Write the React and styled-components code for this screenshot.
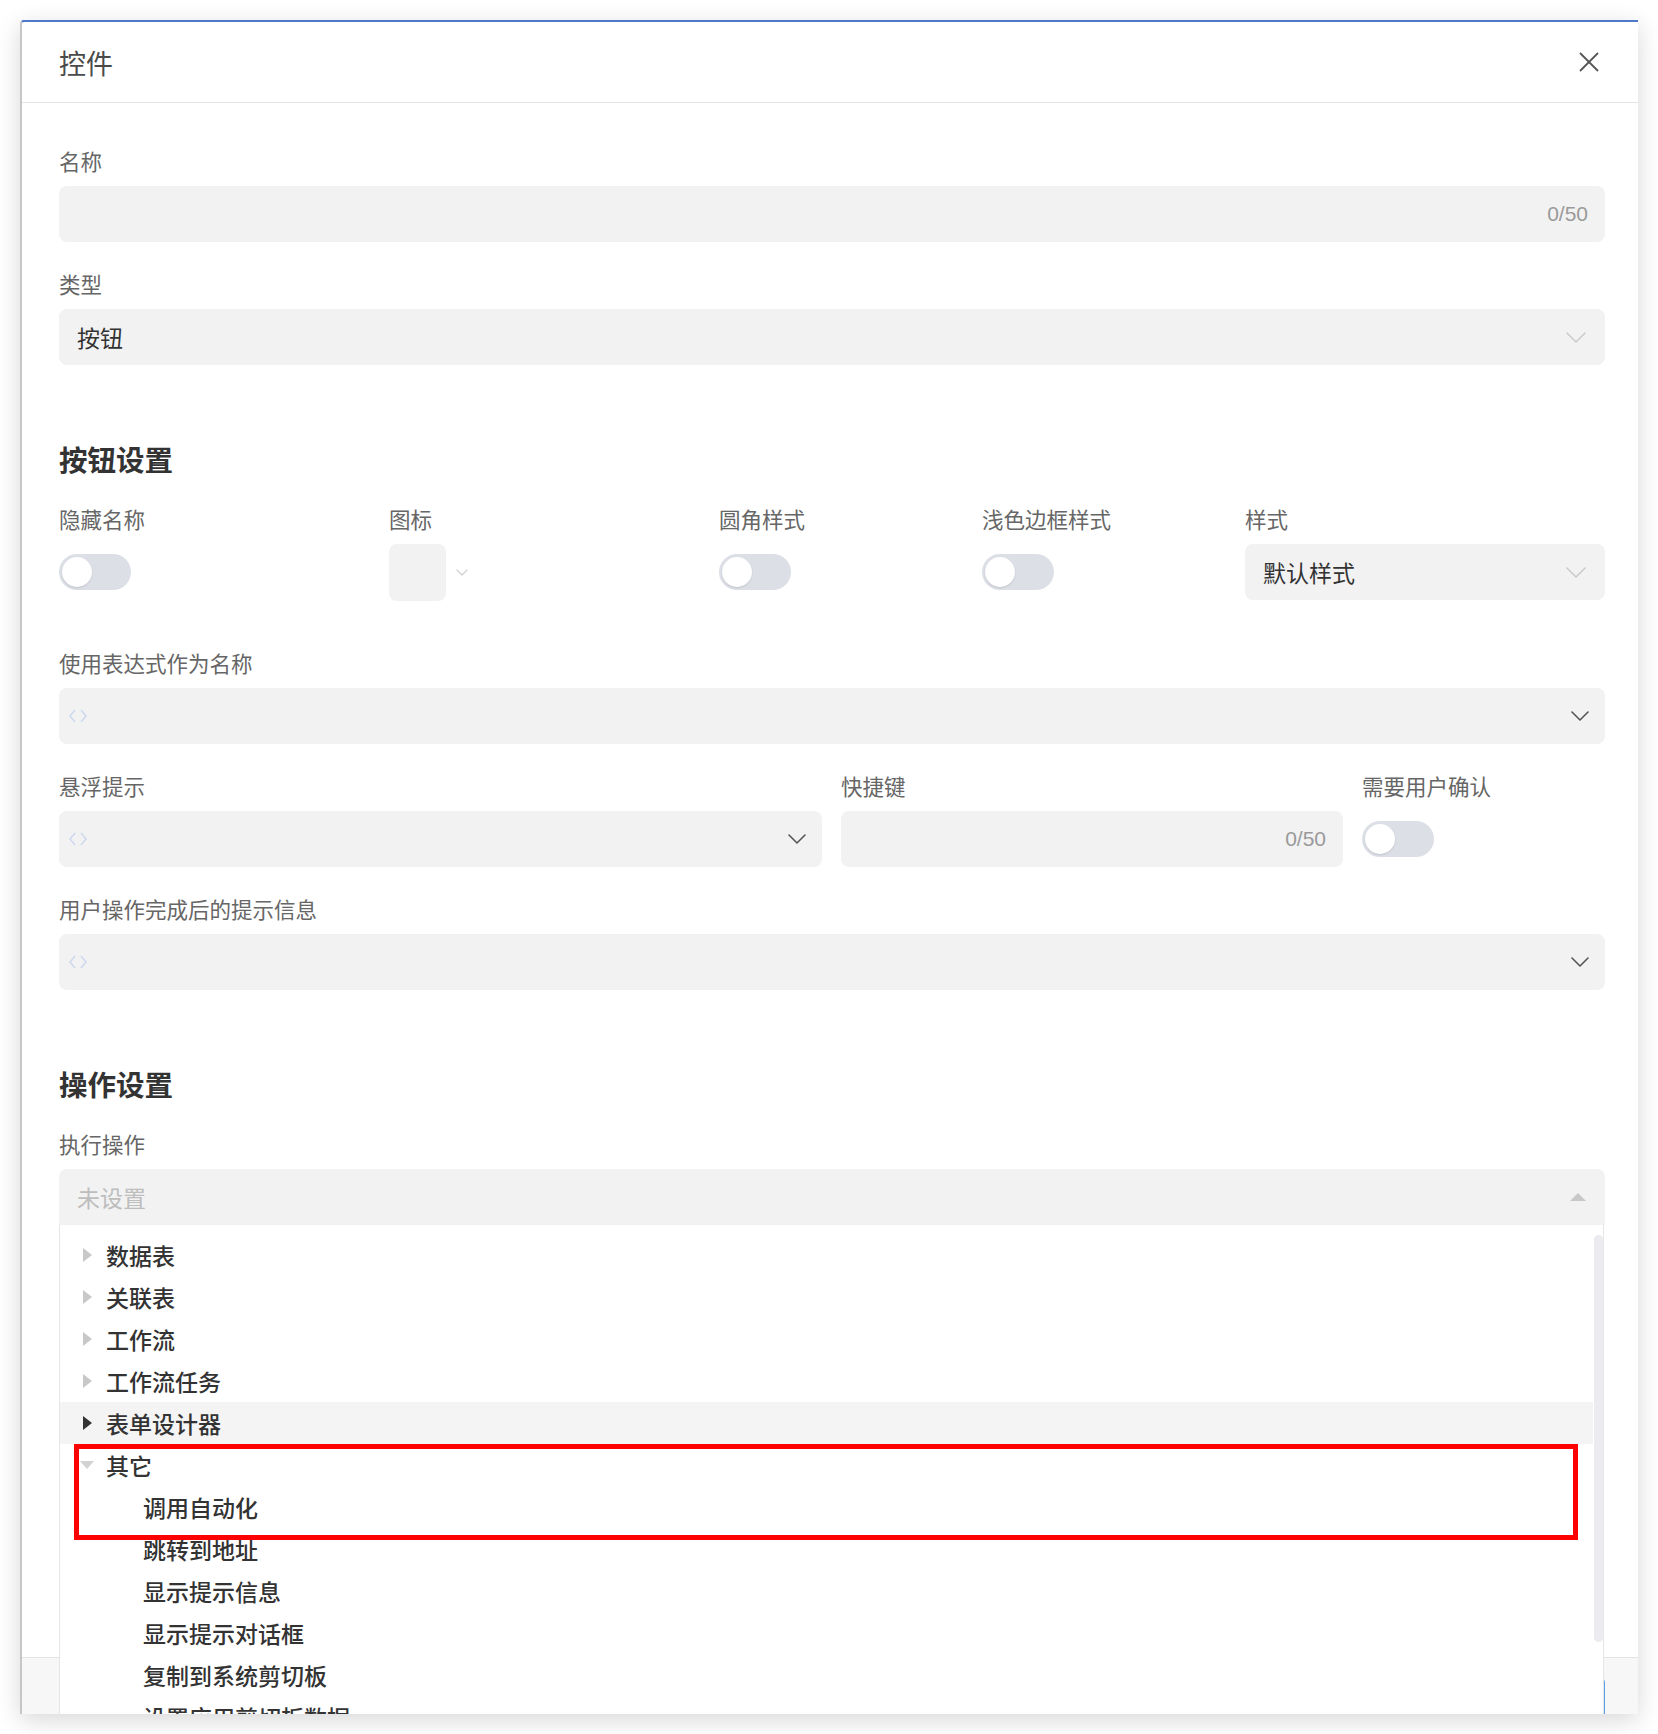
import React from 'react'
import styled, { createGlobalStyle } from 'styled-components'

const GlobalStyle = createGlobalStyle`
  html, body {
    margin: 0;
    padding: 0;
    background: #fff;
  }
  body {
    font-family: "Noto Sans CJK SC", "Noto Sans", sans-serif;
    color: #333;
  }
  * {
    box-sizing: border-box;
  }
`

const Page = styled.div`
  width: 1658px;
  height: 1734px;
  padding: 20px 20px 0 20px;
`

const Dialog = styled.div`
  position: relative;
  width: 1618px;
  height: 1694px;
  display: flex;
  flex-direction: column;
  background: #fff;
  border-top: 2px solid #4c79c9;
  border-left: 2px solid #c6c6c6;
  border-radius: 4px 0 0 0;
  box-shadow: 0 6px 24px rgba(0, 0, 0, 0.16);
  overflow: hidden;
`

const Header = styled.header`
  flex: none;
  height: 81px;
  display: flex;
  align-items: center;
  justify-content: space-between;
  padding: 0 38px 0 37px;
  border-bottom: 1px solid #e4e4e4;
`

const Title = styled.h1`
  margin: 0;
  font-size: 27px;
  font-weight: 400;
  color: #4a4a4a;
`

const CloseButton = styled.button`
  width: 22px;
  height: 22px;
  padding: 0;
  border: none;
  background: none;
  display: flex;
  align-items: center;
  justify-content: center;
`

const Body = styled.main`
  position: relative;
  z-index: 2;
  flex: 1;
  padding: 44px 33px 0 37px;
`

const Field = styled.div`
  margin-top: ${p => p.$top ?? 28}px;
`

const Label = styled.div`
  font-size: 21.5px;
  line-height: 28px;
  color: #666;
  margin-bottom: 11px;
  white-space: nowrap;
`

const InputBox = styled.div`
  height: 56px;
  display: flex;
  align-items: center;
  justify-content: space-between;
  padding: 0 ${p => p.$padRight ?? 18}px 0 ${p => p.$padLeft ?? 18}px;
  background: #f2f2f2;
  border-radius: ${p => (p.$open ? '8px 8px 0 0' : '8px')};
`

const Value = styled.span`
  font-size: 23px;
  color: ${p => (p.$placeholder ? '#bdbdbd' : '#333')};
`

const Counter = styled.span`
  font-family: "Liberation Sans", Arial, sans-serif;
  font-size: 21px;
  color: #9a9a9a;
`

const SectionTitle = styled.h2`
  margin: 76px 0 0;
  font-size: 28.5px;
  line-height: 36px;
  font-weight: 700;
  color: #333;
`

const ButtonGrid = styled.div`
  display: grid;
  grid-template-columns: 330px 330px 263px 263px 1fr;
  margin-top: 28px;
`

const HintGrid = styled.div`
  display: grid;
  grid-template-columns: 763px 502px 1fr;
  column-gap: 19px;
  margin-top: 28px;
`

const ControlSlot = styled.div`
  height: 56px;
  display: flex;
  align-items: center;
  gap: 10px;
`

const Switch = styled.div`
  position: relative;
  width: 72px;
  height: 36px;
  border-radius: 18px;
  background: #dcdfe6;

  &::after {
    content: '';
    position: absolute;
    left: 3px;
    top: 3px;
    width: 30px;
    height: 30px;
    border-radius: 50%;
    background: #fff;
    box-shadow: 0 1px 2px rgba(0, 0, 0, 0.12);
  }
`

const IconSwatch = styled.div`
  width: 57px;
  height: 57px;
  border-radius: 8px;
  background: #f2f2f2;
`

const SelectWrap = styled.div`
  position: relative;
`

const Dropdown = styled.div`
  position: absolute;
  top: 100%;
  left: 0;
  right: 1px;
  height: 520px;
  z-index: 5;
  background: #fff;
  border-left: 1px solid #e6e6e6;
  border-right: 1px solid #e6e6e6;
`

const TreeList = styled.div`
  padding: 9px 10px 0 0;
`

const TreeRow = styled.div`
  height: 42px;
  display: flex;
  align-items: center;
  padding-left: ${p => (p.$child ? 83 : 22)}px;
  background: ${p => (p.$active ? '#f4f4f4' : 'transparent')};
  font-size: 23px;
  font-weight: 500;
  color: #333;
  white-space: nowrap;
`

const Caret = styled.span`
  width: 10px;
  margin-right: 14px;
  display: flex;
  justify-content: center;

  &::before {
    content: '';
    display: block;
    ${p =>
      p.$open
        ? `border-top: 8px solid #d2d2d2; border-left: 7px solid transparent; border-right: 7px solid transparent;`
        : `border-left: 9px solid ${p.$dark ? '#333' : '#c8c8c8'}; border-top: 7px solid transparent; border-bottom: 7px solid transparent;`}
  }
`

const Group = styled.div`
  position: relative;
`

const Highlight = styled.div`
  position: absolute;
  top: 0;
  left: 14px;
  width: 1504px;
  height: 96px;
  border: 5px solid #ff0000;
  pointer-events: none;
`

const ScrollThumb = styled.div`
  position: absolute;
  top: 10px;
  right: 0;
  width: 9px;
  height: 407px;
  border-radius: 5px;
  background: #ebebf0;
`

const Footer = styled.footer`
  position: relative;
  z-index: 1;
  flex: none;
  height: 57px;
  display: flex;
  justify-content: flex-end;
  padding: 20px 33px 0 0;
  background: #f7f7f7;
  border-top: 1px solid #e3e3e3;
`

const PrimaryButton = styled.button`
  width: 110px;
  height: 40px;
  border: 1px solid #5aa0e8;
  border-radius: 4px;
  background: #fff;
  color: #3b8ce0;
  font-family: inherit;
  font-size: 18px;
`

function ChevronDown({ w = 18, h = 10, color = '#555', stroke = 1.6 }) {
  return (
    <svg width={w} height={h} viewBox={`0 0 ${w} ${h}`} fill="none">
      <polyline
        points={`1,1 ${w / 2},${h - 1} ${w - 1},1`}
        stroke={color}
        strokeWidth={stroke}
        strokeLinecap="round"
        strokeLinejoin="round"
      />
    </svg>
  )
}

function CodeIcon() {
  return (
    <svg width="18" height="14" viewBox="0 0 18 14" fill="none">
      <polyline points="6,1 1,7 6,13" stroke="#cfd9ee" strokeWidth="1.6" strokeLinejoin="round" />
      <polyline points="12,1 17,7 12,13" stroke="#cfd9ee" strokeWidth="1.6" strokeLinejoin="round" />
    </svg>
  )
}

function CaretUp() {
  return (
    <svg width="18" height="10" viewBox="0 0 18 10">
      <polygon points="1,9 9,1 17,9" fill="#c8c8c8" />
    </svg>
  )
}

function CloseIcon() {
  return (
    <svg width="22" height="22" viewBox="0 0 22 22" fill="none">
      <line x1="2" y1="2" x2="20" y2="20" stroke="#555" strokeWidth="1.8" />
      <line x1="20" y1="2" x2="2" y2="20" stroke="#555" strokeWidth="1.8" />
    </svg>
  )
}

function ExpressionInput() {
  return (
    <InputBox $padLeft={10} $padRight={16}>
      <CodeIcon />
      <ChevronDown />
    </InputBox>
  )
}

const collapsed = ['数据表', '关联表', '工作流', '工作流任务']
const otherActions = ['跳转到地址', '显示提示信息', '显示提示对话框', '复制到系统剪切板', '设置应用剪切板数据']

export default function App() {
  return (
    <>
      <GlobalStyle />
      <Page>
        <Dialog>
          <Header>
            <Title>控件</Title>
            <CloseButton>
              <CloseIcon />
            </CloseButton>
          </Header>

          <Body>
            <Field $top={0}>
              <Label>名称</Label>
              <InputBox $padRight={17}>
                <span />
                <Counter>0/50</Counter>
              </InputBox>
            </Field>
            <Field>
              <Label>类型</Label>
              <InputBox $padRight={19}>
                <Value>按钮</Value>
                <ChevronDown w={20} h={11} color="#c6c6c6" stroke={1.3} />
              </InputBox>
            </Field>

            <SectionTitle>按钮设置</SectionTitle>
            <ButtonGrid>
              <div>
                <Label>隐藏名称</Label>
                <ControlSlot>
                  <Switch />
                </ControlSlot>
              </div>
              <div>
                <Label>图标</Label>
                <ControlSlot>
                  <IconSwatch />
                  <ChevronDown w={12} h={7} color="#d0d0d0" stroke={1.2} />
                </ControlSlot>
              </div>
              <div>
                <Label>圆角样式</Label>
                <ControlSlot>
                  <Switch />
                </ControlSlot>
              </div>
              <div>
                <Label>浅色边框样式</Label>
                <ControlSlot>
                  <Switch />
                </ControlSlot>
              </div>
              <div>
                <Label>样式</Label>
                <InputBox $padRight={19}>
                  <Value>默认样式</Value>
                  <ChevronDown w={20} h={11} color="#c6c6c6" stroke={1.3} />
                </InputBox>
              </div>
            </ButtonGrid>

            <Field $top={49}>
              <Label>使用表达式作为名称</Label>
              <ExpressionInput />
            </Field>

            <HintGrid>
              <div>
                <Label>悬浮提示</Label>
                <ExpressionInput />
              </div>
              <div>
                <Label>快捷键</Label>
                <InputBox $padRight={17}>
                  <span />
                  <Counter>0/50</Counter>
                </InputBox>
              </div>
              <div>
                <Label>需要用户确认</Label>
                <ControlSlot>
                  <Switch />
                </ControlSlot>
              </div>
            </HintGrid>

            <Field>
              <Label>用户操作完成后的提示信息</Label>
              <ExpressionInput />
            </Field>

            <SectionTitle>操作设置</SectionTitle>
            <Field>
              <Label>执行操作</Label>
              <SelectWrap>
                <InputBox $open $padRight={18}>
                  <Value $placeholder>未设置</Value>
                  <CaretUp />
                </InputBox>
                <Dropdown>
                  <TreeList>
                    {collapsed.map(name => (
                      <TreeRow key={name}>
                        <Caret />
                        {name}
                      </TreeRow>
                    ))}
                    <TreeRow $active>
                      <Caret $dark />
                      表单设计器
                    </TreeRow>
                    <Group>
                      <TreeRow>
                        <Caret $open />
                        其它
                      </TreeRow>
                      <TreeRow $child>调用自动化</TreeRow>
                      <Highlight />
                    </Group>
                    {otherActions.map(name => (
                      <TreeRow key={name} $child>
                        {name}
                      </TreeRow>
                    ))}
                  </TreeList>
                  <ScrollThumb />
                </Dropdown>
              </SelectWrap>
            </Field>
          </Body>

          <Footer>
            <PrimaryButton>确定</PrimaryButton>
          </Footer>
        </Dialog>
      </Page>
    </>
  )
}
